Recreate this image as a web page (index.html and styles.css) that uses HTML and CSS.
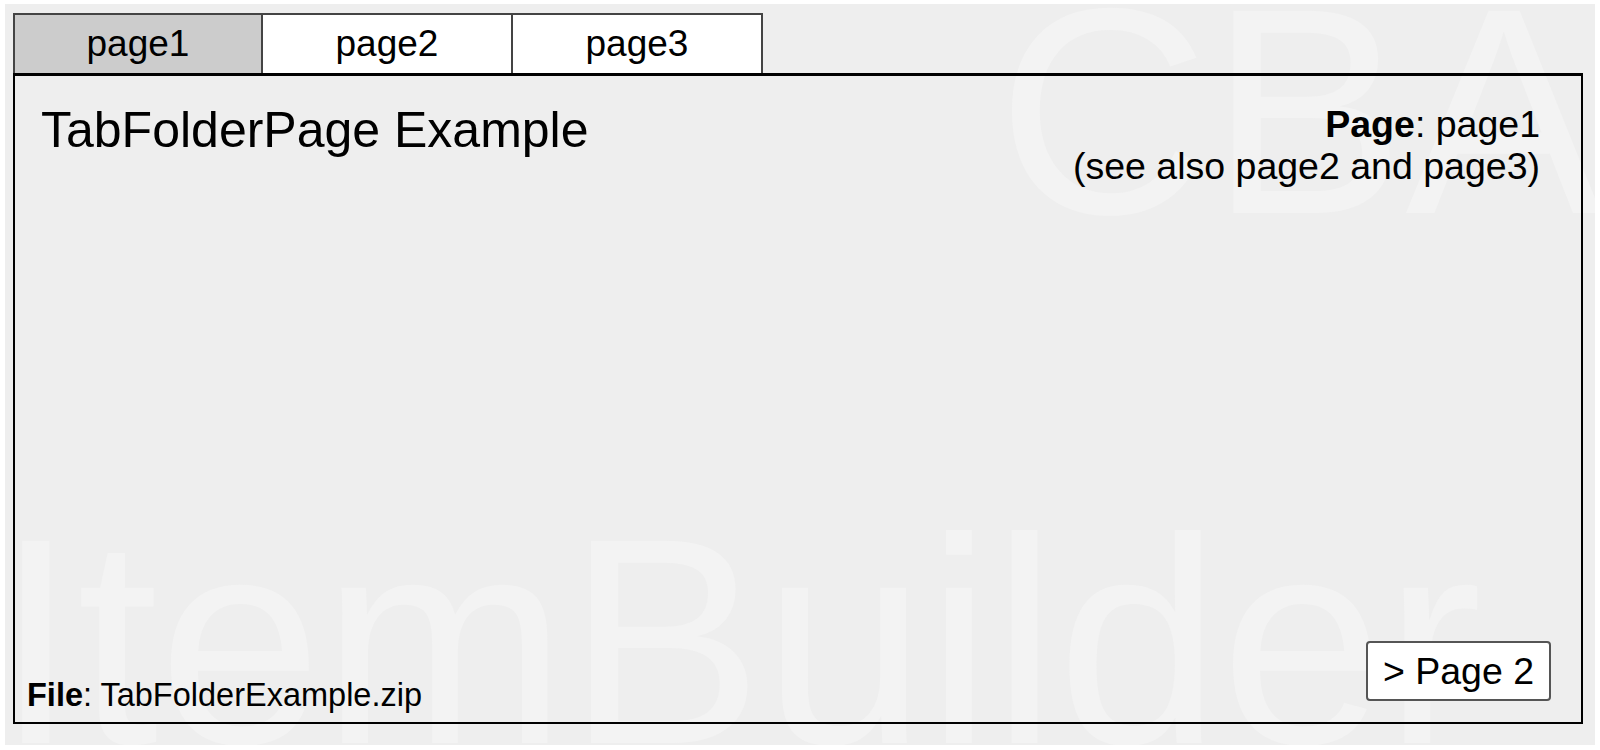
FILE: index.html
```html
<!DOCTYPE html>
<html lang="en">

<head>
    <meta charset="utf-8">
    <title>TabFolderPage Example</title>
    <link rel="stylesheet" href="styles.css">
</head>

<body>
    <div class="stage">
        <!-- watermark behind the item -->
        <div class="watermark" aria-hidden="true">
            <span class="wm-cba">CBA</span>
            <span class="wm-ib">ItemBuilder</span>
        </div>

        <div class="tabs">
            <div class="tab active">page1</div>
            <div class="tab">page2</div>
            <div class="tab">page3</div>
        </div>

        <div class="page">
            <div class="page-head">
                <div class="title">TabFolderPage Example</div>
                <div class="page-info">
                    <b>Page</b>: page1<br>
                    (see also page2 and page3)
                </div>
            </div>

            <div class="page-foot">
                <div class="file"><b>File</b>: TabFolderExample.zip</div>
                <button class="next-btn">&gt; Page 2</button>
            </div>
        </div>
    </div>
</body>

</html>
```

FILE: styles.css
```css
body {
    margin: 0;
    padding: 0;
    background-color: #ffffff;
    font-family: "Liberation Sans", Arial, sans-serif;
    color: #000000;
}

.stage {
    position: relative;
    overflow: hidden;
    box-sizing: border-box;
    width: 1590px;
    height: 741px;
    margin: 4px 5px 0 5px;
    padding: 9px 8px 0 8px;
    background-color: #eeeeee;
}

.watermark {
    position: absolute;
    top: 0;
    left: 0;
    right: 0;
    bottom: 0;
    color: #f3f3f3;
    font-size: 294px;
    line-height: 1;
    white-space: nowrap;
    pointer-events: none;
}

.wm-cba {
    position: absolute;
    left: 992px;
    top: -40px;
}

.wm-ib {
    position: absolute;
    left: -10px;
    top: 490px;
}

.tabs {
    position: relative;
    display: flex;
}

.tab {
    box-sizing: border-box;
    width: 250px;
    height: 60px;
    line-height: 58px;
    text-align: center;
    font-size: 37px;
    background-color: #ffffff;
    border: 2px solid #444444;
    border-bottom: none;
}

.tab + .tab {
    border-left: none;
}

.tab.active {
    background-color: #cccccc;
}

.page {
    position: relative;
    box-sizing: border-box;
    width: 1570px;
    height: 651px;
    border: 2px solid #000000;
    border-top-width: 3px;
    display: flex;
    flex-direction: column;
    justify-content: space-between;
}

.page-head {
    display: flex;
    justify-content: space-between;
    align-items: flex-start;
    padding: 25px 41px 0 26px;
}

.title {
    font-size: 50px;
}

.page-info {
    margin-top: 2px;
    font-size: 37.5px;
    line-height: 42px;
    text-align: right;
}

.page-foot {
    display: flex;
    justify-content: space-between;
    align-items: flex-end;
    padding: 0 30px 8px 12px;
}

.file {
    font-size: 32.5px;
}

.next-btn {
    box-sizing: border-box;
    width: 185px;
    height: 60px;
    margin-bottom: 13px;
    padding: 0;
    font-family: "Liberation Sans", Arial, sans-serif;
    font-size: 37.5px;
    color: #000000;
    background-color: #ffffff;
    border: 2px solid #555555;
    border-radius: 4px;
    cursor: pointer;
}
```
